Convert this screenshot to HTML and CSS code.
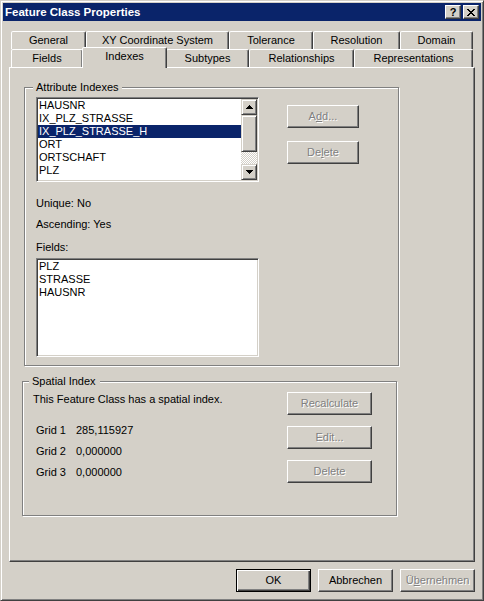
FILE: index.html
```html
<!DOCTYPE html>
<html>
<head>
<meta charset="utf-8">
<title>Feature Class Properties</title>
<link rel="stylesheet" href="styles.css">
</head>
<body>
<div class="window">
  <div class="titlebar">
    <span class="title">Feature Class Properties</span>
    <div class="caption-buttons">
      <span class="cap-btn cap-help">?</span>
      <span class="cap-btn">
        <svg width="8" height="7" viewBox="0 0 8 7" shape-rendering="crispEdges"><path fill="#000" d="M0 0h2v1H0zM6 0h2v1H6zM1 1h2v1H1zM5 1h2v1H5zM2 2h4v1H2zM3 3h2v1H3zM2 4h4v1H2zM1 5h2v1H1zM5 5h2v1H5zM0 6h2v1H0zM6 6h2v1H6z"/></svg>
      </span>
    </div>
  </div>

  <div class="body">
    <div class="tabstrip">
      <div class="tabrow">
        <div class="tab w-general">General</div>
        <div class="tab w-xy">XY Coordinate System</div>
        <div class="tab w-tolerance">Tolerance</div>
        <div class="tab w-resolution">Resolution</div>
        <div class="tab w-domain">Domain</div>
      </div>
      <div class="tabrow">
        <div class="tab w-fields">Fields</div>
        <div class="tab w-indexes tab-selected">Indexes</div>
        <div class="tab w-subtypes">Subtypes</div>
        <div class="tab w-relationships">Relationships</div>
        <div class="tab w-representations">Representations</div>
      </div>
    </div>

    <div class="panel">
      <div class="group group-attr">
        <div class="group-title title-attr">Attribute Indexes</div>
        <div class="attr-top">
          <div class="listbox list-indexes">
            <ul class="items">
              <li>HAUSNR</li>
              <li>IX_PLZ_STRASSE</li>
              <li class="selected">IX_PLZ_STRASSE_H</li>
              <li>ORT</li>
              <li>ORTSCHAFT</li>
              <li>PLZ</li>
            </ul>
            <div class="scrollbar">
              <div class="sb-btn">
                <svg width="7" height="4" viewBox="0 0 7 4" shape-rendering="crispEdges"><path fill="#000" d="M3 0h1v1h1v1h1v1h1v1H0V3h1V2h1V1h1z"/></svg>
              </div>
              <div class="sb-thumb"></div>
              <div class="sb-track"></div>
              <div class="sb-btn">
                <svg width="7" height="4" viewBox="0 0 7 4" shape-rendering="crispEdges"><path fill="#000" d="M0 0h7v1H6v1H5v1H4v1H3V3H2V2H1V1H0z"/></svg>
              </div>
            </div>
          </div>
          <div class="btn-col attr-btns">
            <button class="btn btn-small" disabled>A<u>d</u>d...</button>
            <button class="btn btn-small" disabled>De<u>l</u>ete</button>
          </div>
        </div>
        <p class="prop prop-unique">Unique: No</p>
        <p class="prop prop-asc">Ascending: Yes</p>
        <p class="prop prop-fields">Fields:</p>
        <div class="listbox list-fields">
          <ul class="items">
            <li>PLZ</li>
            <li>STRASSE</li>
            <li>HAUSNR</li>
          </ul>
        </div>
      </div>

      <div class="group group-spatial">
        <div class="group-title title-spatial">Spatial Index</div>
        <div class="spatial-body">
          <div class="spatial-info">
            <p class="msg">This Feature Class has a spatial index.</p>
            <div class="grid-table">
              <span>Grid 1</span><span>285,115927</span>
              <span>Grid 2</span><span>0,000000</span>
              <span>Grid 3</span><span>0,000000</span>
            </div>
          </div>
          <div class="btn-col spatial-btns">
            <button class="btn btn-wide" disabled>Recalculate</button>
            <button class="btn btn-wide" disabled>Edit...</button>
            <button class="btn btn-wide" disabled>Delete</button>
          </div>
        </div>
      </div>
    </div>

    <div class="dialog-buttons">
      <button class="btn btn-dialog btn-default">OK</button>
      <button class="btn btn-dialog">Abbrechen</button>
      <button class="btn btn-dialog" disabled>Ü<u>b</u>ernehmen</button>
    </div>
  </div>
</div>
</body>
</html>
```

FILE: styles.css
```css
html, body {
  margin: 0;
  padding: 0;
  background: #d4d0c8;
}

body {
  font-family: "Liberation Sans", Arial, sans-serif;
  font-size: 11px;
  color: #000;
}

/* ---------- window frame ---------- */
.window {
  width: 484px;
  height: 601px;
  box-sizing: border-box;
  border: 1px solid;
  border-color: #d4d0c8 #404040 #404040 #d4d0c8;
  box-shadow: inset 1px 1px #fff, inset -1px -1px #808080;
  padding: 2px;
  background: #d4d0c8;
}

.titlebar {
  height: 18px;
  background: #0a246a;
  color: #fff;
  display: flex;
  justify-content: space-between;
  align-items: center;
  padding: 0 2px;
}

.title {
  font-weight: bold;
  font-size: 11.5px;
  line-height: 18px;
}

.caption-buttons {
  display: flex;
  gap: 2px;
  align-self: flex-start;
  margin-top: 2px;
}

.cap-btn {
  width: 16px;
  height: 14px;
  box-sizing: border-box;
  background: #d4d0c8;
  border: 1px solid;
  border-color: #fff #404040 #404040 #fff;
  box-shadow: inset -1px -1px #808080;
  display: flex;
  align-items: center;
  justify-content: center;
  color: #000;
}

.cap-help {
  font-weight: bold;
  font-size: 11px;
  line-height: 12px;
}

/* ---------- body ---------- */
.body {
  padding: 10px 6px 0;
}

/* ---------- tabs ---------- */
.tabstrip {
  padding: 0 2px;
}

.tabrow {
  display: flex;
  height: 18px;
}

.tab {
  height: 18px;
  box-sizing: border-box;
  border: 1px solid;
  border-bottom: none;
  border-color: #fff #404040 transparent #fff;
  border-radius: 2px 2px 0 0;
  box-shadow: inset -1px 0 #808080;
  background: #d4d0c8;
  text-align: center;
  line-height: 17px;
  white-space: nowrap;
}

.tab-selected {
  height: 21px;
  margin: -2px -1px -1px;
  line-height: 16px;
  position: relative;
  z-index: 1;
}

.w-general { width: 75px; }
.w-xy { width: 143px; }
.w-tolerance { width: 84px; }
.w-resolution { width: 87px; }
.w-domain { width: 73px; }
.w-fields { width: 72px; }
.w-indexes { width: 83px; }
.w-indexes.tab-selected { width: 85px; }
.w-subtypes { width: 83px; }
.w-relationships { width: 105px; }
.w-representations { width: 119px; }

/* ---------- panel ---------- */
.panel {
  height: 495px;
  box-sizing: border-box;
  border: 1px solid;
  border-color: #fff #404040 #404040 #fff;
  box-shadow: inset -1px -1px #808080;
  overflow: hidden;
}

/* ---------- group boxes ---------- */
.group {
  box-sizing: border-box;
  width: 375px;
  border: 1px solid #808080;
  box-shadow: inset 1px 1px #fff, 1px 1px #fff;
}

.group-attr {
  height: 279px;
  margin: 19px 0 0 14px;
}

.group-spatial {
  height: 135px;
  margin: 15px 0 0 12px;
}

.group-title {
  width: fit-content;
  margin-top: -7px;
  padding: 0 3px;
  line-height: 13px;
  background: #d4d0c8;
}

.title-attr { margin-left: 8px; }
.title-spatial { margin-left: 6px; padding-right: 4px; }

/* ---------- attribute indexes ---------- */
.attr-top {
  display: flex;
  align-items: flex-start;
  margin-top: 3px;
  padding-left: 11px;
}

.listbox {
  box-sizing: border-box;
  width: 223px;
  background: #fff;
  border: 1px solid;
  border-color: #808080 #fff #fff #808080;
  box-shadow: inset 1px 1px #404040, inset -1px -1px #d4d0c8;
  padding: 1px;
  display: flex;
}

.list-indexes { height: 85px; }

.list-fields {
  height: 99px;
  margin: 4px 0 0 11px;
}

.items {
  flex: 1;
  margin: 0;
  padding: 0;
  list-style: none;
  overflow: hidden;
}

.items li {
  height: 13px;
  line-height: 13px;
  padding-left: 1px;
  white-space: nowrap;
}

.items li.selected {
  background: #0a246a;
  color: #fff;
}

.scrollbar {
  width: 16px;
  display: flex;
  flex-direction: column;
}

.sb-btn,
.sb-thumb {
  box-sizing: border-box;
  background: #d4d0c8;
  border: 1px solid;
  border-color: #d4d0c8 #404040 #404040 #d4d0c8;
  box-shadow: inset 1px 1px #fff, inset -1px -1px #808080;
}

.sb-btn {
  height: 16px;
  display: flex;
  align-items: center;
  justify-content: center;
}

.sb-thumb { height: 37px; }

.sb-track {
  flex: 1;
  background: repeating-conic-gradient(#fff 0 25%, #d4d0c8 0 50%) 0 0 / 2px 2px;
}

.btn-col {
  display: flex;
  flex-direction: column;
}

.attr-btns {
  margin: 8px 0 0 28px;
  gap: 13px;
}

.prop {
  margin: 0;
  padding-left: 11px;
  line-height: 13px;
}

.prop-unique { margin-top: 15px; }
.prop-asc { margin-top: 8px; }
.prop-fields { margin-top: 10px; }

/* ---------- spatial index ---------- */
.spatial-body {
  display: flex;
  align-items: flex-start;
}

.spatial-info {
  width: 264px;
  box-sizing: border-box;
  padding-left: 10px;
}

.msg {
  margin: 5px 0 0;
  line-height: 13px;
}

.grid-table {
  display: grid;
  grid-template-columns: 40px auto;
  row-gap: 8px;
  margin-top: 18px;
  padding-left: 3px;
  line-height: 13px;
}

.spatial-btns {
  margin-top: 4px;
  gap: 11px;
}

/* ---------- buttons ---------- */
.btn {
  box-sizing: border-box;
  height: 23px;
  padding: 0;
  margin: 0;
  font: inherit;
  color: #000;
  background: #d4d0c8;
  border: 1px solid;
  border-color: #fff #404040 #404040 #fff;
  box-shadow: inset -1px -1px #808080;
  border-radius: 0;
  appearance: none;
  text-align: center;
  line-height: 13px;
}

.btn:disabled {
  color: #808080;
  text-shadow: 1px 1px 0 #fff;
}

.btn-small { width: 72px; }
.btn-wide { width: 85px; }
.btn-dialog { width: 75px; }

.btn-default {
  border-color: #000;
  box-shadow: inset 1px 1px #fff, inset -1px -1px #404040, inset -2px -2px #808080;
}

.dialog-buttons {
  display: flex;
  justify-content: flex-end;
  gap: 7px;
  margin-top: 7px;
}
```
